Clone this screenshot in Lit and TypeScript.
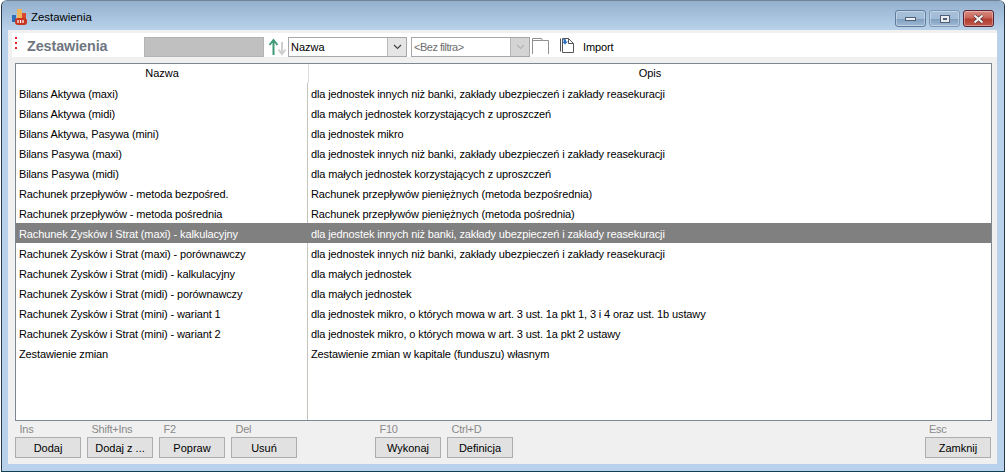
import { LitElement, html, css, svg } from "lit";
import { customElement } from "lit/decorators.js";

const ROWS: [string, string][] = [
  ["Bilans Aktywa (maxi)", "dla jednostek innych niż banki, zakłady ubezpieczeń i zakłady reasekuracji"],
  ["Bilans Aktywa (midi)", "dla małych jednostek korzystających z uproszczeń"],
  ["Bilans Aktywa, Pasywa (mini)", "dla jednostek mikro"],
  ["Bilans Pasywa (maxi)", "dla jednostek innych niż banki, zakłady ubezpieczeń i zakłady reasekuracji"],
  ["Bilans Pasywa (midi)", "dla małych jednostek korzystających z uproszczeń"],
  ["Rachunek przepływów - metoda bezpośred.", "Rachunek przepływów pieniężnych (metoda bezpośrednia)"],
  ["Rachunek przepływów - metoda pośrednia", "Rachunek przepływów pieniężnych (metoda pośrednia)"],
  ["Rachunek Zysków i Strat (maxi) - kalkulacyjny", "dla jednostek innych niż banki, zakłady ubezpieczeń i zakłady reasekuracji"],
  ["Rachunek Zysków i Strat (maxi) - porównawczy", "dla jednostek innych niż banki, zakłady ubezpieczeń i zakłady reasekuracji"],
  ["Rachunek Zysków i Strat (midi) - kalkulacyjny", "dla małych jednostek"],
  ["Rachunek Zysków i Strat (midi) - porównawczy", "dla małych jednostek"],
  ["Rachunek Zysków i Strat (mini) - wariant 1", "dla jednostek mikro, o których mowa w art. 3 ust. 1a pkt 1, 3 i 4 oraz ust. 1b ustawy"],
  ["Rachunek Zysków i Strat (mini) - wariant 2", "dla jednostek mikro, o których mowa w art. 3 ust. 1a pkt 2 ustawy"],
  ["Zestawienie zmian", "Zestawienie zmian w kapitale (funduszu) własnym"],
];

const chevron = (c: string) => svg`<svg width="9" height="6" viewBox="0 0 9 6"><path d="M1 1l3.5 3.5L8 1" fill="none" stroke="${c}" stroke-width="1.2"/></svg>`;

@customElement("app-root")
export class AppRoot extends LitElement {
  static styles = css`
    :host { display: block; width: 1006px; height: 472px; background: #fff; overflow: hidden;
      font-family: "Liberation Sans", Arial, sans-serif; font-size: 11px; color: #000; }
    .win { box-sizing: border-box; width: 1004px; height: 472px; margin-left: 1px; display: flex; flex-direction: column;
      border: 1px solid #24384a; border-top-color: #6f8498; border-bottom-color: #0e3f52; border-radius: 6px 6px 0 0;
      background: #b9d1ea; }
    .title { height: 29px; flex: none; display: flex; align-items: center; padding: 2px 9px 0 10px; box-sizing: border-box;
      background: linear-gradient(#93b0ce, #b9d2ea); border-radius: 5px 5px 0 0; }
    .title .t { margin-left: 3px; font-size: 11.4px; color: #000; }
    .ctrls { margin-left: auto; display: flex; gap: 3px; align-self: flex-start; margin-top: 7px; margin-right: 1px; }
    .ctrl { width: 31px; height: 17px; box-sizing: border-box; border: 1px solid #5f7c9c; border-radius: 3px;
      background: linear-gradient(#a6c0da 0, #a2bbd6 50%, #7f9dbd 52%, #9fbad6 100%);
      display: flex; align-items: center; justify-content: center; box-shadow: inset 0 0 0 1px rgba(255,255,255,.35); }
    .ctrl.max { border-color: #7d98b6; }
    .ctrl.close { border-color: #5a2232; background: linear-gradient(#d88a80 0, #c9645a 48%, #b23b2e 52%, #c05a4c 100%); }
    .min-i { width: 9px; height: 2px; border: 1px solid #4e5f73; background: #eef1f5; }
    .max-i { width: 10px; height: 8px; box-sizing: border-box; border: 1px solid #4e5f73; background: #e8ecf1; display: flex; align-items: center; justify-content: center; }
    .max-i::after { content: ""; width: 4px; height: 2px; background: #4e5f73; }
    .body { flex: none; height: 434px; margin: 0 7px 0 6px; background: #f0f0f0; display: flex; flex-direction: column; }
    .toolbar { margin: 3px 0 0 4px; height: 24px; flex: none; background: #fff; display: flex; align-items: flex-start; }
    .dots { width: 2px; margin: 4px 0 0 3px; display: flex; flex-direction: column; gap: 3px; }
    .dots i { display: block; width: 2px; height: 2px; background: #ee1c25; }
    .h { margin: 4px 0 0 10px; width: 117px; font-size: 14.4px; line-height: 18px; font-weight: bold; color: #6e7681; letter-spacing: -.1px; }
    .gray { width: 120px; height: 20px; margin-top: 4px; background: #c0c0c0; border: 1px solid #b4b4b4; box-sizing: border-box; }
    .arrows { width: 20px; margin: 5px 0 0 4px; height: 18px; }
    .combo { width: 119px; height: 20px; margin-top: 4px; box-sizing: border-box; border: 1px solid #a8a8a8; background: #fff;
      display: flex; align-items: center; padding-left: 2px; font-size: 11px; }
    .combo .txt { flex: 1; }
    .combo.off { margin-left: 4px; color: #6d6d6d; }
    .combo.off .txt { letter-spacing: -.5px; }
    .btn { width: 19px; height: 18px; box-sizing: border-box; background: #e5e5e5; border-left: 1px solid #b8b8b8; display: flex; align-items: center; justify-content: center; }
    .off .btn { background: #d4d4d4; }
    .folder { margin: 4px 0 0 2px; width: 17px; height: 18px; }
    .imp { margin: 4px 0 0 10px; width: 16px; height: 18px; }
    .implab { margin: 8px 0 0 8px; line-height: 13px; letter-spacing: -.1px; }
    .table { margin: 6px 5px 0 7px; height: 358px; flex: none; box-sizing: border-box; border: 1px solid #7f8794; background: #fff;
      display: flex; flex-direction: column; }
    .head { display: grid; grid-template-columns: 292px 1fr; height: 19px; flex: none; line-height: 18px; text-align: center; }
    .head div + div { border-left: 1px solid #dcdcdc; }
    .rows { flex: 1; display: flex; flex-direction: column; background: linear-gradient(#c4c4bc, #c4c4bc) 291px 0 / 1px 100% no-repeat; }
    .row { display: grid; grid-template-columns: 292px 1fr; height: 20px; flex: none; line-height: 22px; white-space: nowrap; letter-spacing: -.12px; }
    .row span { padding-left: 3px; }
    .row.sel { background: #808080; color: #fff; }
    .foot { display: flex; margin: 2px 6px 0 7px; }
    .fb { width: 66px; margin-right: 6px; flex: none; }
    .fb label { display: block; height: 13px; line-height: 13px; padding-left: 4.5px; color: #8a8a8a; letter-spacing: -.25px; }
    .fb button { display: block; width: 66px; height: 21px; padding: 0; box-sizing: border-box; margin: 1px 0 0; border: 1px solid #adadad; background: #e1e1e1;
      font: inherit; color: #000; }
    .gap { margin-left: 72px; }
    .right { margin-left: auto; margin-right: 0; }
    .right label { padding-left: 4px; }
  `;

  private fbtn(k: string, t: string, cls = "") {
    return html`<div class="fb ${cls}"><label>${k}</label><button>${t}</button></div>`;
  }

  render() {
    return html`<div class="win">
      <div class="title">
        <svg width="16" height="16" viewBox="0 0 16 16">
          <rect x="0" y="6" width="4" height="7" fill="#2f6fb5"/>
          <rect x="5" y="0" width="5" height="10" fill="#f0b45a"/>
          <rect x="10" y="4" width="4" height="7" fill="#d8492e"/>
          <rect x="3" y="9" width="12" height="7" rx="3" fill="#c8351f"/>
          <path d="M6 11v3M8.5 11v3M11 11v3" stroke="#fff" stroke-width="1.2"/>
        </svg>
        <span class="t">Zestawienia</span>
        <div class="ctrls">
          <div class="ctrl"><div class="min-i"></div></div>
          <div class="ctrl max"><div class="max-i"></div></div>
          <div class="ctrl close">
            <svg width="13" height="10" viewBox="0 0 13 10"><path d="M2.5 1.5l8 7M10.5 1.5l-8 7" stroke="#4e3038" stroke-width="3.6"/><path d="M2.5 1.5l8 7M10.5 1.5l-8 7" stroke="#f4f2f2" stroke-width="2.2"/></svg>
          </div>
        </div>
      </div>
      <div class="body">
        <div class="toolbar">
          <div class="dots"><i></i><i></i><i></i></div>
          <div class="h">Zestawienia</div>
          <div class="gray"></div>
          <svg class="arrows" viewBox="0 0 20 18">
            <path d="M5.5 17V3M1.5 7l4-5 4 5" fill="none" stroke="#3f9a78" stroke-width="2"/>
            <path d="M14 4v12M10.5 11.5l3.5 4.5 3.5-4.5" fill="none" stroke="#cfcfcf" stroke-width="2"/>
          </svg>
          <div class="combo"><span class="txt">Nazwa</span><div class="btn">${chevron("#444")}</div></div>
          <div class="combo off"><span class="txt">&lt;Bez filtra&gt;</span><div class="btn">${chevron("#b4b4b4")}</div></div>
          <svg class="folder" viewBox="0 0 17 18"><path d="M.5 17V1.5h9l1 2h6M.5 3.5h9.5" fill="none" stroke="#8f8f8f"/><path d="M16.5 3.5V17" stroke="#8f8f8f"/></svg>
          <svg class="imp" viewBox="0 0 16 18">
            <path d="M1.5 1.5v13M3.5 1.5h6l5 5v9h-11z" fill="#fff" stroke="#555"/>
            <path d="M9.5 1.5v5h5" fill="none" stroke="#555"/>
            <path d="M4 1.5l3 1 0 2 2 0-3 3-3-3 2 0z" fill="#2a6fc0"/>
          </svg>
          <div class="implab">Import</div>
        </div>
        <div class="table">
          <div class="head"><div>Nazwa</div><div>Opis</div></div>
          <div class="rows">
            ${ROWS.map((r, i) => html`<div class="row ${i === 7 ? "sel" : ""}"><span>${r[0]}</span><span>${r[1]}</span></div>`)}
          </div>
        </div>
        <div class="foot">
          ${this.fbtn("Ins", "Dodaj")}
          ${this.fbtn("Shift+Ins", "Dodaj z ...")}
          ${this.fbtn("F2", "Popraw")}
          ${this.fbtn("Del", "Usuń")}
          ${this.fbtn("F10", "Wykonaj", "gap")}
          ${this.fbtn("Ctrl+D", "Definicja")}
          <div class="fb right"><label>Esc</label><button>Zamknij</button></div>
        </div>
      </div>
    </div>`;
  }
}
